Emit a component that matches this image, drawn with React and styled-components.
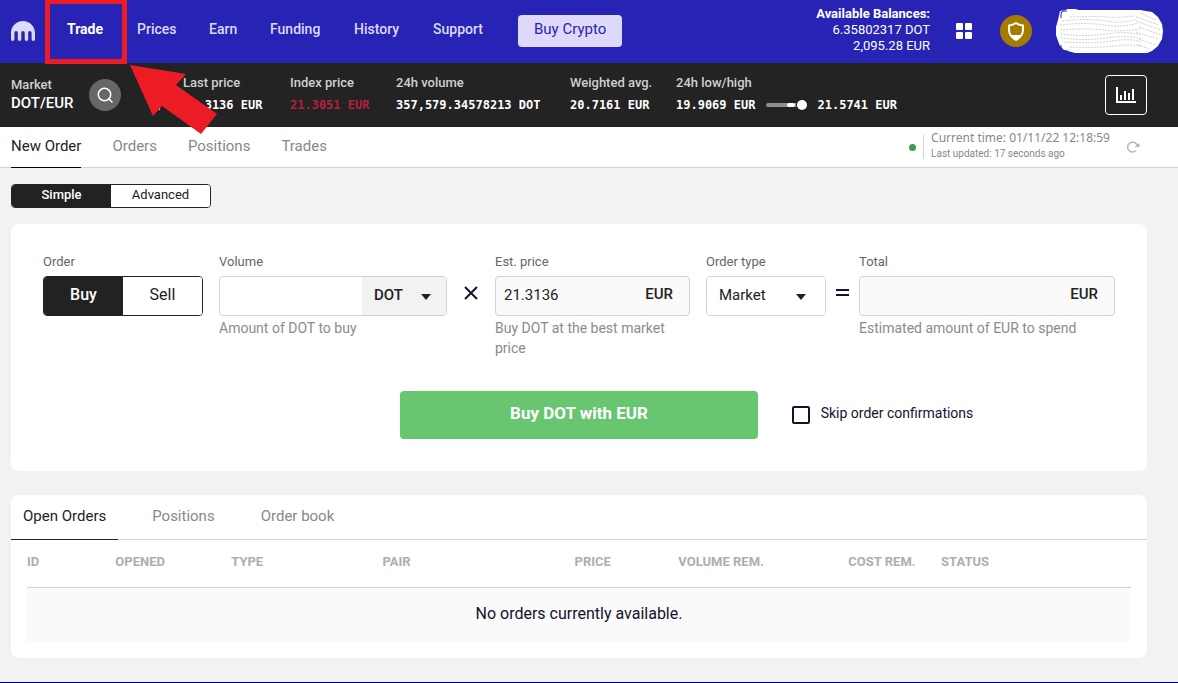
import React, { useState } from "react";
import styled, { createGlobalStyle } from "styled-components";

const GlobalStyle = createGlobalStyle`
    *, *::before, *::after{
        box-sizing: border-box;
    }
    body{
        margin: 0;
        background-color: #f2f2f2;
        color: #222222;
        font-family: Roboto, "Noto Sans", sans-serif;
        font-size: 14px;
        line-height: 20px;
    }
    button, input, select{
        font-family: inherit;
        font-size: inherit;
        color: inherit;
    }
    button, select{
        cursor: pointer;
    }
`;

const Page = styled.div`
    position: relative;
`;

const Header = styled.header`
    display: flex;
    align-items: center;
    height: 63px;
    padding: 0 15px 1px 11px;
    background-color: #2723b5;
    color: #ddd9fa;
`;

const Nav = styled.nav`
    display: flex;
    align-items: center;
    gap: 32px;
    margin-left: 32px;
`;

const NavLink = styled.a`
    min-width: ${props => props.$width}px;
    padding-bottom: 4px;
    color: ${props => props.$active ? "#ffffff" : "#ddd9fa"};
    font-weight: ${props => props.$active ? 700 : 500};
    text-decoration: none;
`;

const BuyCrypto = styled.button`
    height: 32px;
    padding: 0 16px 4px;
    border: 0;
    border-radius: 4px;
    background-color: #ded9fb;
    color: #2723b5;
    font-size: 15px;
`;

const Balances = styled.div`
    margin-left: auto;
    padding-bottom: 3px;
    color: #ffffff;
    font-size: 13px;
    line-height: 16px;
    text-align: right;
`;

const IconButton = styled.button`
    display: flex;
    padding: 0;
    border: 0;
    background: none;
    margin-left: ${props => props.$space || 0}px;
`;

const MarketBar = styled.section`
    display: flex;
    align-items: center;
    height: 64px;
    padding: 0 31px 0 11px;
    background-color: #232323;
    color: #ffffff;
`;

const Market = styled.div`
    width: 78px;
    padding-bottom: 3px;
    line-height: 18px;
    color: #d0d0d0;
    font-size: 13px;
    font-weight: 500;

    & > strong{
        display: block;
        color: #ffffff;
        font-size: 15px;
        font-weight: 500;
    }
`;

const SearchButton = styled.button`
    display: flex;
    align-items: center;
    justify-content: center;
    width: 32px;
    height: 32px;
    padding: 0;
    border: 0;
    border-radius: 50%;
    background-color: #666666;
    color: #ffffff;
`;

const Divider = styled.span`
    width: 1px;
    height: ${props => props.$height}px;
    margin-left: ${props => props.$space || 0}px;
    background-color: #d3d3d3;
`;

const Stats = styled.dl`
    display: grid;
    grid-template-columns: 83px 82px 150px 82px auto;
    column-gap: 24px;
    margin: 0 0 0 23px;
    padding-bottom: 2px;
    line-height: 22px;
    white-space: nowrap;

    & dt{
        color: #d0d0d0;
        font-size: 13px;
        font-weight: 500;
    }
    & dd{
        display: flex;
        align-items: center;
        margin: 0;
        font-family: "DejaVu Sans Mono", "Liberation Mono", monospace;
        font-size: 12px;
        font-weight: 700;
    }
    & dd.down{
        color: #b5213d;
    }
`;

const Range = styled.svg`
    margin: 0 9px 0 11px;
`;

const ChartButton = styled.button`
    display: flex;
    align-items: center;
    justify-content: center;
    width: 42px;
    height: 40px;
    margin-left: auto;
    padding: 0;
    border: 1px solid #ffffff;
    border-radius: 4px;
    background: none;
    color: #ffffff;
`;

const SubBar = styled.div`
    display: flex;
    justify-content: space-between;
    height: 41px;
    padding: 0 38px 0 11px;
    border-bottom: 1px solid #d3d3d3;
    background-color: #ffffff;
`;

const SubNav = styled.nav`
    display: flex;
    gap: 31px;
`;

const SubLink = styled.a`
    height: 41px;
    padding-top: 9px;
    border-bottom: 1px solid ${props => props.$active ? "#000000" : "transparent"};
    color: ${props => props.$active ? "#222222" : "#888888"};
    font-size: 15px;
    text-decoration: none;
`;

const Status = styled.div`
    display: flex;
    align-items: center;
    color: #888888;

    &::before{
        content: "";
        width: 7px;
        height: 7px;
        margin-right: 7px;
        border-radius: 50%;
        background-color: #3f9b55;
    }
`;

const Times = styled.div`
    padding: 0 17px 2px 7px;
    font-family: "Noto Sans", sans-serif;
    font-size: 12px;
    line-height: 16px;

    & > small{
        display: block;
        font-family: Roboto, sans-serif;
        font-size: 10px;
    }
`;

const Main = styled.main`
    display: flex;
    flex-direction: column;
    align-items: flex-start;
    padding: 16px 31px 24px 11px;
`;

const Switch = styled.div`
    display: flex;
    width: ${props => props.$small ? 200 : 160}px;
    height: ${props => props.$small ? 24 : 40}px;
    border: 1px solid #222222;
    border-radius: 4px;
    background-color: #ffffff;
    overflow: hidden;
    font-size: ${props => props.$small ? 13 : 16}px;
`;

const SwitchButton = styled.button`
    flex: 1;
    padding: 0 0 3px;
    border: 0;
    background-color: ${props => props.$active ? "#222222" : "#ffffff"};
    color: ${props => props.$active ? "#ffffff" : "#222222"};
    font-weight: ${props => props.$active ? 500 : 400};
`;

const Card = styled.section`
    width: 100%;
    margin-top: ${props => props.$space}px;
    border-radius: 8px;
    background-color: #ffffff;
`;

const OrderForm = styled.form`
    padding: 28px 32px 32px;
`;

const Fields = styled.div`
    display: grid;
    grid-template-columns: 160px 228fr 16px 195fr 120px 1px 256fr;
    column-gap: 16px;
    min-height: 107px;
`;

const Field = styled.div`
    display: flex;
    flex-direction: column;
    min-width: 0;

    & > label, & > span{
        height: 20px;
        margin-bottom: 4px;
        color: #666666;
        font-size: 13px;
    }
    & > p{
        margin: 2px 0 0;
        color: #8b8b8b;
        font-size: 14px;
    }
`;

const Box = styled.div`
    display: flex;
    height: 40px;
    border: 1px solid #d3d3d3;
    border-radius: 4px;
    background-color: ${props => props.$filled ? "#fafafa" : "#ffffff"};
    overflow: hidden;
    color: #222222;

    & > input{
        flex: 1;
        min-width: 0;
        padding: 0 8px 2px;
        border: 0;
        outline: 0;
        background: none;
        font-size: 15px;
    }
    & > b{
        padding: 7px 16px 0 0;
        font-size: 15px;
        font-weight: 500;
    }
`;

const Picker = styled.div`
    position: relative;
    width: ${props => props.$wide ? "100%" : "84px"};
    background-color: ${props => props.$wide ? "#ffffff" : "#f2f2f2"};

    & > select{
        width: 100%;
        height: 38px;
        padding: 0 24px 3px 12px;
        border: 0;
        outline: 0;
        appearance: none;
        background: none;
        font-size: 15px;
        font-weight: ${props => props.$wide ? 400 : 500};
    }
    & > svg{
        position: absolute;
        top: 17px;
        right: ${props => props.$wide ? 19 : 15}px;
        pointer-events: none;
    }
`;

const Sign = styled.svg`
    justify-self: center;
    margin-top: 33px;
`;

const Actions = styled.div`
    display: grid;
    grid-template-columns: 1fr 1fr 1fr;
    margin-top: 32px;
`;

const Submit = styled.button`
    grid-column: 2;
    height: 48px;
    padding: 0 0 4px;
    border: 0;
    border-radius: 4px;
    background-color: #69c670;
    color: #ffffff;
    font-size: 17px;
    font-weight: 700;
`;

const Skip = styled.label`
    display: flex;
    align-items: center;
    gap: 11px;
    padding-left: 34px;
    color: #13132f;
    font-size: 14px;

    & > span{
        padding-bottom: 4px;
    }
    & > input{
        width: 18px;
        height: 18px;
        margin: 0;
        border: 2px solid #13132f;
        border-radius: 2px;
        appearance: none;
    }
    & > input:checked{
        background-color: #13132f;
    }
`;

const Tabs = styled.div`
    display: flex;
    gap: 22px;
    height: 45px;
    border-bottom: 1px solid #d3d3d3;
`;

const Tab = styled.button`
    height: 45px;
    padding: 0 12px 3px;
    border: 0;
    border-bottom: 1px solid ${props => props.$active ? "#222222" : "transparent"};
    background: none;
    color: ${props => props.$active ? "#222222" : "#888888"};
    font-size: 15px;
    text-align: left;
`;

const TableWrap = styled.div`
    padding: 0 16px 16px;
`;

const Table = styled.table`
    width: 100%;
    border-collapse: collapse;
    table-layout: fixed;

    & th{
        height: 47px;
        padding: 0 0 2px;
        border-bottom: 1px solid #d3d3d3;
        color: #aeaeae;
        font-size: 13px;
        font-weight: 700;
        text-align: left;
        white-space: nowrap;
    }
    & td{
        height: 55px;
        padding: 0 0 2px;
        background-color: #fafafa;
        color: #13132f;
        font-size: 16px;
        text-align: center;
    }
`;

const Footer = styled.footer`
    height: 1px;
    background-color: #00007f;
`;

const Callout = styled.svg`
    position: absolute;
    top: 0;
    left: 0;
    pointer-events: none;
`;

const links = [
    { name: "Prices", width: 40 },
    { name: "Earn", width: 29 },
    { name: "Funding", width: 52 },
    { name: "History", width: 47 },
    { name: "Support", width: 53 },
];

const subLinks = ["New Order", "Orders", "Positions", "Trades"];

const bottomTabs = ["Open Orders", "Positions", "Order book"];

const columns = [
    { name: "ID", width: "8%" },
    { name: "OPENED", width: "10.5%" },
    { name: "TYPE", width: "13.7%" },
    { name: "PAIR", width: "17.4%" },
    { name: "PRICE", width: "9.4%" },
    { name: "VOLUME REM.", width: "15.4%" },
    { name: "COST REM.", width: "8.4%" },
    { name: "STATUS", width: "17.2%" },
];

const Logo = () => (
    <svg width="24" height="20" viewBox="0 0 24 20" fill="#ddd9fa" aria-label="Kraken">
        <path d="M12 0C5.4 0 0 5.2 0 11.8v6.4a1.7 1.7 0 0 0 3.4 0v-6.4a1.7 1.7 0 0 1 3.4 0v6.4a1.7 1.7 0 0 0 3.5 0v-6.4a1.7 1.7 0 0 1 3.4 0v6.4a1.7 1.7 0 0 0 3.5 0v-6.4a1.7 1.7 0 0 1 3.4 0v6.4a1.7 1.7 0 0 0 3.4 0v-6.4C24 5.2 18.6 0 12 0z" />
    </svg>
);

const Caret = () => (
    <svg width="10" height="6" viewBox="0 0 10 6" fill="#222222">
        <path d="M0 0h10L5 6z" />
    </svg>
);

// the account name is painted over with loose strokes
const Scribble = () => (
    <svg width="107" height="44" viewBox="0 0 107 44" fill="none">
        <path
            d="M4 2 9 1 12 0 19 0 23 1 84 1 96 3 102 8 106 15 107 22 106 30 102 37 96 42 91 44 19 44 8 41 4 37 2 32 0 26 0 18 2 11z"
            fill="#ffffff"
        />
        <path d="M11 2H8Q5 2 5 5v4M5 36v3q0 3 3 3h4" stroke="#2723b5" />
        <path
            d="M6 12q25-3 44 0t30-2M4 16q25-3 44 0t34-2M4 21q28-2 44 0t36-1M5 25q24 3 45 0t34 1M5 29q24 3 45 0t36 1M8 33q30 2 48-1t30 1M14 38q28 1 44-1t28 0M14 8q28-1 38 0t26-1M84 4l16 7M80 8l23 8M80 12l25 9M83 18l22 8M80 23l22 7M83 30l16 6M82 36l12 4"
            stroke="#d2d1da"
            strokeDasharray="2 1"
        />
    </svg>
);

function App() {
    const [mode, setMode] = useState("Simple");
    const [side, setSide] = useState("Buy");
    const [tab, setTab] = useState("Open Orders");
    const [volume, setVolume] = useState("");
    const [skip, setSkip] = useState(false);

    return (
        <Page>
            <GlobalStyle />
            <Header>
                <Logo />
                <Nav>
                    <NavLink href="#trade" $active $width={38}>Trade</NavLink>
                    {links.map(link => (
                        <NavLink key={link.name} href={`#${link.name}`} $width={link.width}>{link.name}</NavLink>
                    ))}
                    <BuyCrypto type="button">Buy Crypto</BuyCrypto>
                </Nav>
                <Balances>
                    <b>Available Balances:</b>
                    <div>6.35802317 DOT</div>
                    <div>2,095.28 EUR</div>
                </Balances>
                <IconButton type="button" aria-label="Apps" $space={26}>
                    <svg width="16" height="16" fill="#ffffff">
                        <rect width="7" height="7" rx="1" />
                        <rect x="9" width="7" height="7" rx="1" />
                        <rect y="9" width="7" height="7" rx="1" />
                        <rect x="9" y="9" width="7" height="7" rx="1" />
                    </svg>
                </IconButton>
                <IconButton type="button" aria-label="Security" $space={28}>
                    <svg width="32" height="32" fill="none">
                        <circle cx="16" cy="16" r="16" fill="#a37c00" />
                        <path d="M16 8Q13 10 9 10.500V15q0 6 7 10 7-4 7-10v-4.500Q19 10 16 8z" stroke="#ffffff" strokeWidth="2" strokeLinejoin="round" />
                        <path d="M11 20h10q-2 4-5 5.500-3-1.500-5-5.500z" fill="#ffffff" />
                    </svg>
                </IconButton>
                <IconButton type="button" aria-label="Account" $space={24}>
                    <Scribble />
                </IconButton>
            </Header>

            <MarketBar>
                <Market>Market<strong>DOT/EUR</strong></Market>
                <SearchButton type="button" aria-label="Search markets">
                    <svg width="16" height="16" fill="none" stroke="currentColor" strokeWidth="1.500" strokeLinecap="round">
                        <circle cx="7.500" cy="7.500" r="6.200" />
                        <path d="m12 12 3 3" />
                    </svg>
                </SearchButton>
                <Divider $height={30} $space={38} />
                <Stats>
                    <div><dt>Last price</dt><dd>21.3136 EUR</dd></div>
                    <div><dt>Index price</dt><dd className="down">21.3051 EUR</dd></div>
                    <div><dt>24h volume</dt><dd>357,579.34578213 DOT</dd></div>
                    <div><dt>Weighted avg.</dt><dd>20.7161 EUR</dd></div>
                    <div>
                        <dt>24h low/high</dt>
                        <dd>
                            19.9069 EUR
                            <Range width="42" height="12">
                                <rect y="4" width="36" height="4" rx="2" fill="#8f8f8f" />
                                <rect x="21" y="4" width="8" height="4" rx="2" fill="#ffffff" />
                                <circle cx="36" cy="6" r="6" fill="#232323" />
                                <circle cx="36" cy="6" r="5" fill="#ffffff" />
                            </Range>
                            21.5741 EUR
                        </dd>
                    </div>
                </Stats>
                <ChartButton type="button" aria-label="Show chart">
                    <svg width="20" height="16" fill="none" stroke="currentColor" strokeWidth="2">
                        <path d="M1 0v15h19M5 13V8M9 13V4M13 13V6M17 13V2" />
                    </svg>
                </ChartButton>
            </MarketBar>

            <SubBar>
                <SubNav>
                    {subLinks.map((name, i) => (
                        <SubLink key={name} href={`#${name}`} $active={i === 0}>{name}</SubLink>
                    ))}
                </SubNav>
                <Status>
                    <Divider $height={24} />
                    <Times>
                        Current time: 01/11/22 12:18:59
                        <small>Last updated: 17 seconds ago</small>
                    </Times>
                    <IconButton type="button" aria-label="Refresh">
                        <svg width="13" height="12" fill="none" stroke="#b5b5b5" strokeWidth="1.500">
                            <path d="M9 9.800A5 5 0 1 1 10.400 4.500" />
                            <path d="M7.500 6h5V2z" fill="#b5b5b5" stroke="none" />
                        </svg>
                    </IconButton>
                </Status>
            </SubBar>

            <Main>
                <Switch $small role="group" aria-label="Order mode">
                    {["Simple", "Advanced"].map(name => (
                        <SwitchButton key={name} type="button" $active={mode === name} onClick={() => setMode(name)}>{name}</SwitchButton>
                    ))}
                </Switch>

                <Card $space={16}>
                    <OrderForm onSubmit={e => e.preventDefault()}>
                        <Fields>
                            <Field>
                                <span>Order</span>
                                <Switch role="group" aria-label="Order">
                                    {["Buy", "Sell"].map(name => (
                                        <SwitchButton key={name} type="button" $active={side === name} onClick={() => setSide(name)}>{name}</SwitchButton>
                                    ))}
                                </Switch>
                            </Field>
                            <Field>
                                <label htmlFor="volume">Volume</label>
                                <Box>
                                    <input id="volume" value={volume} onChange={e => setVolume(e.target.value)} />
                                    <Picker>
                                        <select aria-label="Volume currency">
                                            <option>DOT</option>
                                            <option>EUR</option>
                                        </select>
                                        <Caret />
                                    </Picker>
                                </Box>
                                <p>Amount of DOT to buy</p>
                            </Field>
                            <Sign width="14" height="16" stroke="#13132f" strokeWidth="2">
                                <path d="m1 2 12 12M13 2 1 14" />
                            </Sign>
                            <Field>
                                <label htmlFor="price">Est. price</label>
                                <Box $filled>
                                    <input id="price" value="21.3136" readOnly />
                                    <b>EUR</b>
                                </Box>
                                <p>Buy DOT at the best market price</p>
                            </Field>
                            <Field>
                                <label htmlFor="type">Order type</label>
                                <Box>
                                    <Picker $wide>
                                        <select id="type">
                                            <option>Market</option>
                                            <option>Limit</option>
                                        </select>
                                        <Caret />
                                    </Picker>
                                </Box>
                            </Field>
                            <Sign width="14" height="16" stroke="#13132f" strokeWidth="2">
                                <path d="M0 5h13M0 10h13" />
                            </Sign>
                            <Field>
                                <label htmlFor="total">Total</label>
                                <Box $filled>
                                    <input id="total" readOnly />
                                    <b>EUR</b>
                                </Box>
                                <p>Estimated amount of EUR to spend</p>
                            </Field>
                        </Fields>
                        <Actions>
                            <Submit type="submit">Buy DOT with EUR</Submit>
                            <Skip>
                                <input type="checkbox" checked={skip} onChange={() => setSkip(!skip)} />
                                <span>Skip order confirmations</span>
                            </Skip>
                        </Actions>
                    </OrderForm>
                </Card>

                <Card $space={24}>
                    <Tabs role="tablist">
                        {bottomTabs.map(name => (
                            <Tab
                                key={name}
                                type="button"
                                role="tab"
                                aria-selected={tab === name}
                                $active={tab === name}
                                onClick={() => setTab(name)}
                            >
                                {name}
                            </Tab>
                        ))}
                    </Tabs>
                    <TableWrap>
                        <Table>
                            <colgroup>
                                {columns.map(col => <col key={col.name} style={{ width: col.width }} />)}
                            </colgroup>
                            <thead>
                                <tr>{columns.map(col => <th key={col.name}>{col.name}</th>)}</tr>
                            </thead>
                            <tbody>
                                <tr><td colSpan={columns.length}>No orders currently available.</td></tr>
                            </tbody>
                        </Table>
                    </TableWrap>
                </Card>
            </Main>
            <Footer />

            <Callout width="220" height="136">
                <rect x="47.500" y="1.500" width="77" height="60" fill="none" stroke="#ec1c24" strokeWidth="5" />
                <path d="m130 65 56 9-10 11 41 29-16 20-39-28-9 10z" fill="#ec1c24" />
            </Callout>
        </Page>
    );
}

export default App;
